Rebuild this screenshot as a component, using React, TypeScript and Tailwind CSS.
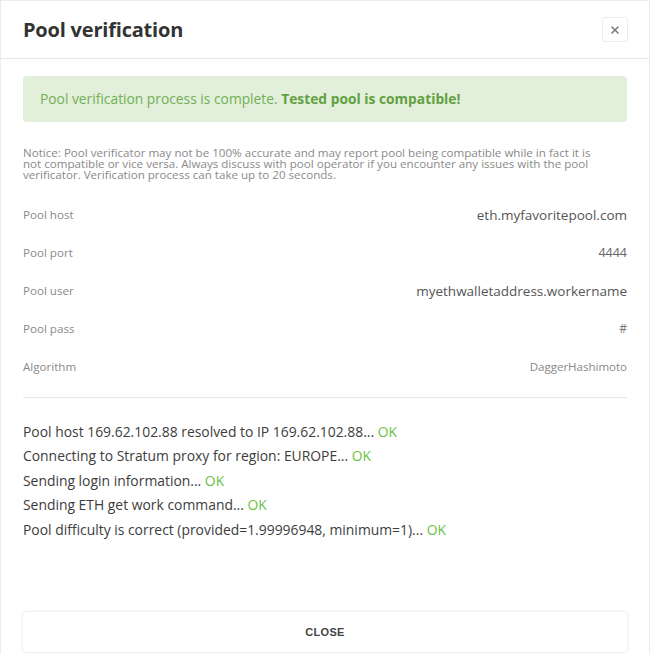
import { X } from "lucide-react";

const rows = [
  { label: "Pool host", value: "eth.myfavoritepool.com", cls: "text-[13.5px] text-[#555]" },
  { label: "Pool port", value: "4444", cls: "text-[12.5px] text-[#666]" },
  { label: "Pool user", value: "myethwalletaddress.workername", cls: "text-[13.5px] text-[#555]" },
  { label: "Pool pass", value: "#", cls: "text-[12px] text-[#777]" },
  { label: "Algorithm", value: "DaggerHashimoto", cls: "text-[11.5px] text-[#888]" },
];

const log = [
  "Pool host 169.62.102.88 resolved to IP 169.62.102.88...",
  "Connecting to Stratum proxy for region: EUROPE...",
  "Sending login information...",
  "Sending ETH get work command...",
  "Pool difficulty is correct (provided=1.99996948, minimum=1)...",
];

export default function App() {
  return (
    <div
      className="w-[650px] h-[654px] bg-white border-x border-t border-[#ececec] flex flex-col overflow-hidden"
      style={{ fontFamily: "'Open Sans', 'Noto Sans', sans-serif" }}
    >
      {/* header */}
      <div className="h-[58px] flex items-center justify-between pl-[22px] pr-[21px] border-b border-[#e8e8e8]">
        <h1 className="text-[20px] font-bold text-[#333] tracking-[-0.2px]">Pool verification</h1>
        <button className="w-[26px] h-[25px] flex items-center justify-center border border-[#ececec] rounded-[3px] text-[#777]">
          <X size={12} strokeWidth={3} />
        </button>
      </div>

      <div className="flex-1 flex flex-col px-[22px] pt-[17px]">
        <div className="h-[46px] rounded-[4px] bg-[#e1efdb] flex items-center px-[17px] text-[13.8px] text-[#74b053]">
          Pool verification process is complete.&nbsp;<b className="font-bold text-[#62a140]">Tested pool is compatible!</b>
        </div>

        <p className="mt-[25px] text-[11.6px] leading-[11px] text-[#8a8a8a] whitespace-nowrap">
          Notice: Pool verificator may not be 100% accurate and may report pool being compatible while in fact it is
          <br />
          not compatible or vice versa. Always discuss with pool operator if you encounter any issues with the pool
          <br />
          verificator. Verification process can take up to 20 seconds.
        </p>

        <div className="mt-[16px] flex flex-col">
          {rows.map((r) => (
            <div key={r.label} className="h-[38px] flex items-center justify-between">
              <span className="text-[11.6px] text-[#8a8a8a]">{r.label}</span>
              <span className={r.cls}>{r.value}</span>
            </div>
          ))}
        </div>

        <div className="mt-[11px] border-t border-[#e6e6e6]" />

        <div className="mt-[22px] flex flex-col">
          {log.map((l) => (
            <div key={l} className="h-[24.5px] flex items-center text-[13.9px] text-[#3d3d3d]">
              {l}&nbsp;<span className="text-[#6cbf45]">OK</span>
            </div>
          ))}
        </div>

        <div className="mt-auto mb-[2px] h-[40px] rounded-[4px] bg-white shadow-[0_0_3px_rgba(0,0,0,0.15)] flex items-center justify-center">
          <span className="text-[11px] font-bold text-[#444] tracking-[0.3px]" style={{ fontFamily: "'Liberation Sans', Arial, sans-serif" }}>
            CLOSE
          </span>
        </div>
      </div>
    </div>
  );
}
